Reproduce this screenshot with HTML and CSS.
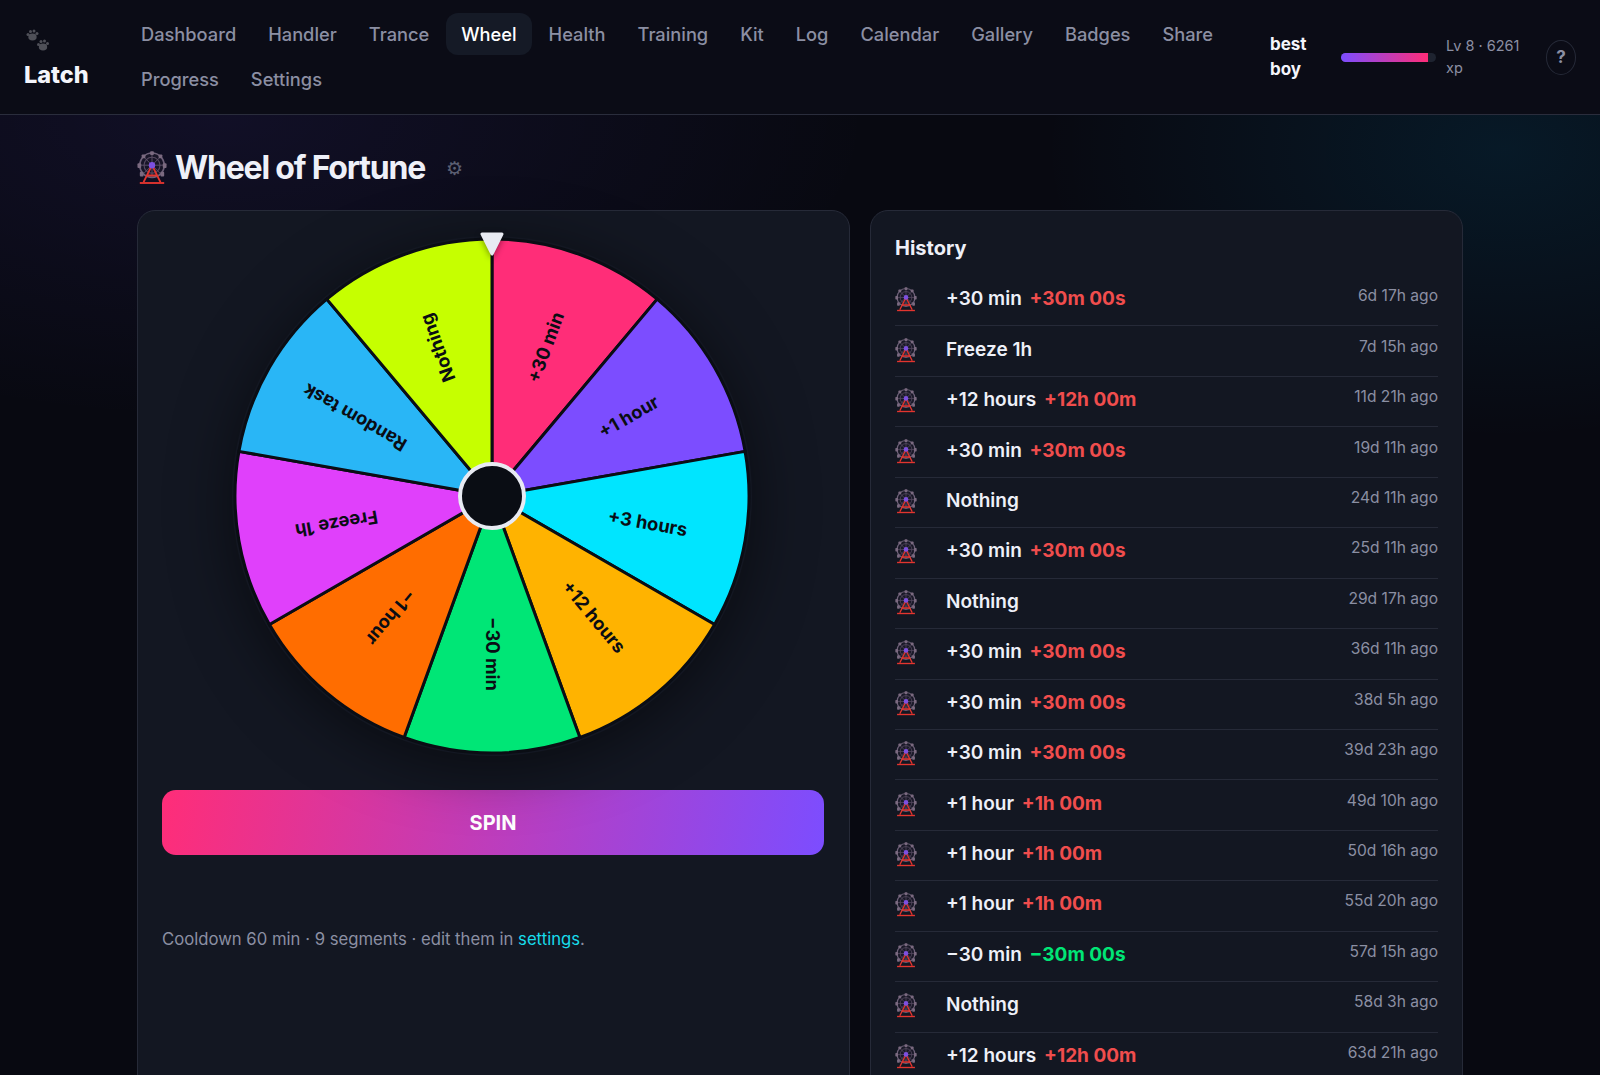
FILE: index.html
```html
<!DOCTYPE html>
<html lang="en">
<head>
  <meta charset="UTF-8">
  <title>Latch - Wheel of Fortune</title>
  <link rel="stylesheet" href="styles.css">
</head>
<body>

  <svg class="defs" width="0" height="0" aria-hidden="true">
    <defs>
      <symbol id="ferris" viewBox="0 0 32 36">
        <circle cx="16" cy="15" r="13" fill="#221c2e" fill-opacity=".5" stroke="#6d6078" stroke-width="1.8"/>
        <circle cx="16" cy="15" r="8.5" fill="none" stroke="#54485f" stroke-width="1.2"/>
        <path d="M16 2V28M3 15H29M6.8 5.8L25.2 24.2M25.2 5.8L6.8 24.2" stroke="#5c4f68" stroke-width="1"/>
        <g fill="#7b6a80">
          <rect x="14" y="0" width="4" height="4" rx="1"/>
          <rect x="5" y="3.5" width="4" height="4" rx="1"/>
          <rect x="23" y="3.5" width="4" height="4" rx="1"/>
          <rect x="0.5" y="13" width="4" height="5" rx="1"/>
          <rect x="27.5" y="13" width="4" height="5" rx="1"/>
          <rect x="3" y="22" width="4" height="5" rx="1"/>
          <rect x="25" y="22" width="4" height="5" rx="1"/>
        </g>
        <path d="M16 15L7 33M16 15L25 33M10.5 26H21.5" fill="none" stroke="#e2352f" stroke-width="2"/>
        <path d="M3 34H29" stroke="#e2352f" stroke-width="2"/>
        <circle cx="16" cy="15" r="3.4" fill="#7d50e0"/>
      </symbol>
    </defs>
  </svg>

  <header class="topbar">
    <div class="brand">
      <svg class="brand-paw" viewBox="0 0 26 26" width="26" height="26" aria-hidden="true">
        <g fill="#4f5058">
          <ellipse cx="7.5" cy="10" rx="4.2" ry="3.4"/>
          <circle cx="3" cy="7.5" r="1.5"/>
          <circle cx="5.5" cy="4.5" r="1.5"/>
          <circle cx="9" cy="4" r="1.5"/>
          <circle cx="12" cy="6.5" r="1.5"/>
          <ellipse cx="18" cy="20" rx="4.2" ry="3.4"/>
          <circle cx="13.5" cy="17.5" r="1.5"/>
          <circle cx="16" cy="14.5" r="1.5"/>
          <circle cx="19.5" cy="14" r="1.5"/>
          <circle cx="22.5" cy="16.5" r="1.5"/>
        </g>
      </svg>
      <div class="brand-name">Latch</div>
    </div>

    <nav class="nav">
      <a class="nav-link">Dashboard</a>
      <a class="nav-link">Handler</a>
      <a class="nav-link">Trance</a>
      <a class="nav-link active">Wheel</a>
      <a class="nav-link">Health</a>
      <a class="nav-link">Training</a>
      <a class="nav-link">Kit</a>
      <a class="nav-link">Log</a>
      <a class="nav-link">Calendar</a>
      <a class="nav-link">Gallery</a>
      <a class="nav-link">Badges</a>
      <a class="nav-link">Share</a>
      <a class="nav-link">Progress</a>
      <a class="nav-link">Settings</a>
    </nav>

    <div class="user">
      <div class="user-name">best boy</div>
      <div class="xp-bar"><div class="xp-fill" style="width: 92%"></div></div>
      <div class="xp-label">Lv 8 · 6261 xp</div>
      <button class="help">?</button>
    </div>
  </header>

  <main class="page">
    <div class="title-row">
      <svg class="title-icon"><use href="#ferris"/></svg>
      <h1>Wheel of Fortune</h1>
      <span class="gear">⚙</span>
    </div>

    <div class="columns">
      <section class="card wheel-card">
        <div class="wheel">
          <svg class="wheel-svg" viewBox="-260 -260 520 520" width="520" height="520">
            <g class="slices">
              <path fill="#ff2d78" d="M0 0L0-257A257 257 0 0 1 165.2-196.9Z"/>
              <path fill="#7c4dff" transform="rotate(40)" d="M0 0L0-257A257 257 0 0 1 165.2-196.9Z"/>
              <path fill="#00e5ff" transform="rotate(80)" d="M0 0L0-257A257 257 0 0 1 165.2-196.9Z"/>
              <path fill="#ffb300" transform="rotate(120)" d="M0 0L0-257A257 257 0 0 1 165.2-196.9Z"/>
              <path fill="#00e676" transform="rotate(160)" d="M0 0L0-257A257 257 0 0 1 165.2-196.9Z"/>
              <path fill="#ff6d00" transform="rotate(200)" d="M0 0L0-257A257 257 0 0 1 165.2-196.9Z"/>
              <path fill="#e040fb" transform="rotate(240)" d="M0 0L0-257A257 257 0 0 1 165.2-196.9Z"/>
              <path fill="#29b6f6" transform="rotate(280)" d="M0 0L0-257A257 257 0 0 1 165.2-196.9Z"/>
              <path fill="#c6ff00" transform="rotate(320)" d="M0 0L0-257A257 257 0 0 1 165.2-196.9Z"/>
            </g>
            <g class="labels">
              <text transform="rotate(-70) translate(158 6)">+30 min</text>
              <text transform="rotate(-30) translate(158 6)">+1 hour</text>
              <text transform="rotate(10) translate(158 6)">+3 hours</text>
              <text transform="rotate(50) translate(158 6)">+12 hours</text>
              <text transform="rotate(90) translate(158 6)">−30 min</text>
              <text transform="rotate(130) translate(158 6)">−1 hour</text>
              <text transform="rotate(170) translate(158 6)">Freeze 1h</text>
              <text transform="rotate(210) translate(158 6)">Random task</text>
              <text transform="rotate(250) translate(158 6)">Nothing</text>
            </g>
            <circle class="hub" r="32"/>
          </svg>
          <svg class="pointer" viewBox="0 0 26 26" width="26" height="26" aria-hidden="true">
            <path d="M3 3H23L13 23Z" fill="#e8eaf2" stroke="#e8eaf2" stroke-width="3" stroke-linejoin="round"/>
          </svg>
        </div>

        <button class="spin">SPIN</button>

        <p class="note">Cooldown 60 min · 9 segments · edit them in <a class="note-link">settings</a>.</p>
      </section>

      <section class="card history">
        <h2>History</h2>
        <ul class="history-list">
          <li class="row"><svg class="row-icon"><use href="#ferris"/></svg><span class="row-main">+30 min <b class="up">+30m 00s</b></span><span class="row-time">6d 17h ago</span></li>
          <li class="row"><svg class="row-icon"><use href="#ferris"/></svg><span class="row-main">Freeze 1h</span><span class="row-time">7d 15h ago</span></li>
          <li class="row"><svg class="row-icon"><use href="#ferris"/></svg><span class="row-main">+12 hours <b class="up">+12h 00m</b></span><span class="row-time">11d 21h ago</span></li>
          <li class="row"><svg class="row-icon"><use href="#ferris"/></svg><span class="row-main">+30 min <b class="up">+30m 00s</b></span><span class="row-time">19d 11h ago</span></li>
          <li class="row"><svg class="row-icon"><use href="#ferris"/></svg><span class="row-main">Nothing</span><span class="row-time">24d 11h ago</span></li>
          <li class="row"><svg class="row-icon"><use href="#ferris"/></svg><span class="row-main">+30 min <b class="up">+30m 00s</b></span><span class="row-time">25d 11h ago</span></li>
          <li class="row"><svg class="row-icon"><use href="#ferris"/></svg><span class="row-main">Nothing</span><span class="row-time">29d 17h ago</span></li>
          <li class="row"><svg class="row-icon"><use href="#ferris"/></svg><span class="row-main">+30 min <b class="up">+30m 00s</b></span><span class="row-time">36d 11h ago</span></li>
          <li class="row"><svg class="row-icon"><use href="#ferris"/></svg><span class="row-main">+30 min <b class="up">+30m 00s</b></span><span class="row-time">38d 5h ago</span></li>
          <li class="row"><svg class="row-icon"><use href="#ferris"/></svg><span class="row-main">+30 min <b class="up">+30m 00s</b></span><span class="row-time">39d 23h ago</span></li>
          <li class="row"><svg class="row-icon"><use href="#ferris"/></svg><span class="row-main">+1 hour <b class="up">+1h 00m</b></span><span class="row-time">49d 10h ago</span></li>
          <li class="row"><svg class="row-icon"><use href="#ferris"/></svg><span class="row-main">+1 hour <b class="up">+1h 00m</b></span><span class="row-time">50d 16h ago</span></li>
          <li class="row"><svg class="row-icon"><use href="#ferris"/></svg><span class="row-main">+1 hour <b class="up">+1h 00m</b></span><span class="row-time">55d 20h ago</span></li>
          <li class="row"><svg class="row-icon"><use href="#ferris"/></svg><span class="row-main">−30 min <b class="down">−30m 00s</b></span><span class="row-time">57d 15h ago</span></li>
          <li class="row"><svg class="row-icon"><use href="#ferris"/></svg><span class="row-main">Nothing</span><span class="row-time">58d 3h ago</span></li>
          <li class="row"><svg class="row-icon"><use href="#ferris"/></svg><span class="row-main">+12 hours <b class="up">+12h 00m</b></span><span class="row-time">63d 21h ago</span></li>
        </ul>
      </section>
    </div>
  </main>

</body>
</html>
```

FILE: styles.css
```css
* {
  box-sizing: border-box;
}

body {
  margin: 0;
  height: 100vh;
  overflow: hidden;
  font-family: 'Inter', 'Liberation Sans', sans-serif;
  color: #eef0f8;
  background:
    radial-gradient(640px 400px at 94% 14%, rgba(0, 170, 235, 0.1), transparent 72%),
    radial-gradient(900px 420px at 14% 11%, rgba(110, 80, 255, 0.09), transparent 72%),
    #080911;
}

.defs {
  position: absolute;
}

/* Top bar */
.topbar {
  display: flex;
  align-items: center;
  height: 115px;
  padding: 0 24px;
  background: #0b0c16;
  border-bottom: 1px solid #2a2d3c;
}

.brand {
  width: 102px;
  flex-shrink: 0;
  margin-top: 2px;
}

.brand-paw {
  display: block;
  margin: 0 0 7px 1px;
}

.brand-name {
  font-size: 23.5px;
  font-weight: 800;
  line-height: 30px;
  color: #f4f5fb;
}

.nav {
  flex: 1;
  display: flex;
  flex-wrap: wrap;
  gap: 3px 2px;
  margin-top: -2px;
}

.nav-link {
  padding: 10px 15px;
  border-radius: 12px;
  font-size: 18.25px;
  font-weight: 500;
  line-height: 22px;
  color: #8b8fa3;
}

.nav-link.active {
  background: #151a26;
  color: #fff;
}

.user {
  display: flex;
  align-items: center;
  flex-shrink: 0;
  margin-left: 16px;
}

.user-name {
  width: 71px;
  padding-right: 20px;
  font-size: 17px;
  font-weight: 700;
  line-height: 25px;
  color: #f4f5fb;
}

.xp-bar {
  width: 95px;
  height: 9px;
  border-radius: 5px;
  background: #1e2330;
  overflow: hidden;
}

.xp-fill {
  height: 100%;
  background: linear-gradient(90deg, #7c4dff, #ff2d78);
}

.xp-label {
  width: 84px;
  margin-left: 10px;
  font-size: 14.5px;
  line-height: 22px;
  color: #8b8fa3;
}

.help {
  width: 30px;
  height: 35px;
  margin-left: 16px;
  padding: 0;
  border: 1px solid #262a38;
  border-radius: 50%;
  background: transparent;
  font-family: inherit;
  font-size: 17px;
  font-weight: 700;
  color: #8b8fa3;
}

/* Page */
.page {
  width: 1326px;
  margin: 0 auto;
}

.title-row {
  display: flex;
  align-items: center;
  height: 95px;
  padding-top: 10px;
}

.title-icon {
  width: 30px;
  height: 34px;
  margin-right: 8px;
}

h1 {
  margin: 0;
  font-size: 32px;
  font-weight: 700;
  letter-spacing: -1.2px;
  color: #eef0f8;
}

.gear {
  margin-left: 21px;
  font-family: 'DejaVu Sans', sans-serif;
  font-size: 19px;
  color: #5b5f72;
}

.columns {
  display: grid;
  grid-template-columns: 713px 1fr;
  gap: 20px;
}

.card {
  padding: 24px;
  min-height: 900px;
  background: #131722;
  border: 1px solid #262a38;
  border-radius: 18px;
}

.wheel-card {
  padding-right: 25px;
}

/* Wheel */
.wheel {
  position: relative;
  z-index: 1;
  width: 520px;
  height: 520px;
  margin: 1px 0 34px 70px;
}

.wheel-svg {
  display: block;
  border-radius: 50%;
  box-shadow: 0 10px 60px rgba(0, 0, 0, 0.5);
}

.slices path {
  stroke: #0a0d14;
  stroke-width: 3;
}

.labels text {
  font-size: 18.3px;
  font-weight: 700;
  text-anchor: middle;
  fill: #0a0d14;
}

.hub {
  fill: #0a0d14;
  stroke: #e8eaf2;
  stroke-width: 4;
}

.pointer {
  position: absolute;
  top: -5px;
  left: 247px;
  filter: drop-shadow(0 2px 3px rgba(0, 0, 0, 0.4));
}

.spin {
  display: block;
  width: 100%;
  height: 65px;
  border: none;
  border-radius: 14px;
  background: linear-gradient(100deg, #ff2d78, #7c4dff);
  font-family: inherit;
  font-size: 20px;
  font-weight: 700;
  color: #fff;
}

.note {
  margin: 72px 0 0;
  font-size: 16.7px;
  line-height: 24px;
  color: #8b8fa3;
}

.note-link {
  color: #18dcec;
}

/* History */
h2 {
  margin: 1px 0 16px;
  font-size: 20px;
  font-weight: 700;
  line-height: 24px;
  color: #eef0f8;
}

.history-list {
  margin: 0;
  padding: 0;
  list-style: none;
}

.row {
  display: flex;
  align-items: center;
  height: 50.45px;
  border-bottom: 1px solid #262a38;
}

.row-icon {
  width: 22px;
  height: 25px;
  margin: -2px 29px 0 0;
  flex-shrink: 0;
}

.row-main {
  flex: 1;
  margin-top: -4px;
  font-size: 19px;
  font-weight: 600;
  color: #eef0f8;
}

.row-main b {
  margin-left: 3px;
  font-weight: 700;
}

.up {
  color: #f04d4d;
}

.down {
  color: #00e676;
}

.row-time {
  margin-top: -10px;
  font-size: 15.6px;
  color: #8b8fa3;
}
```
